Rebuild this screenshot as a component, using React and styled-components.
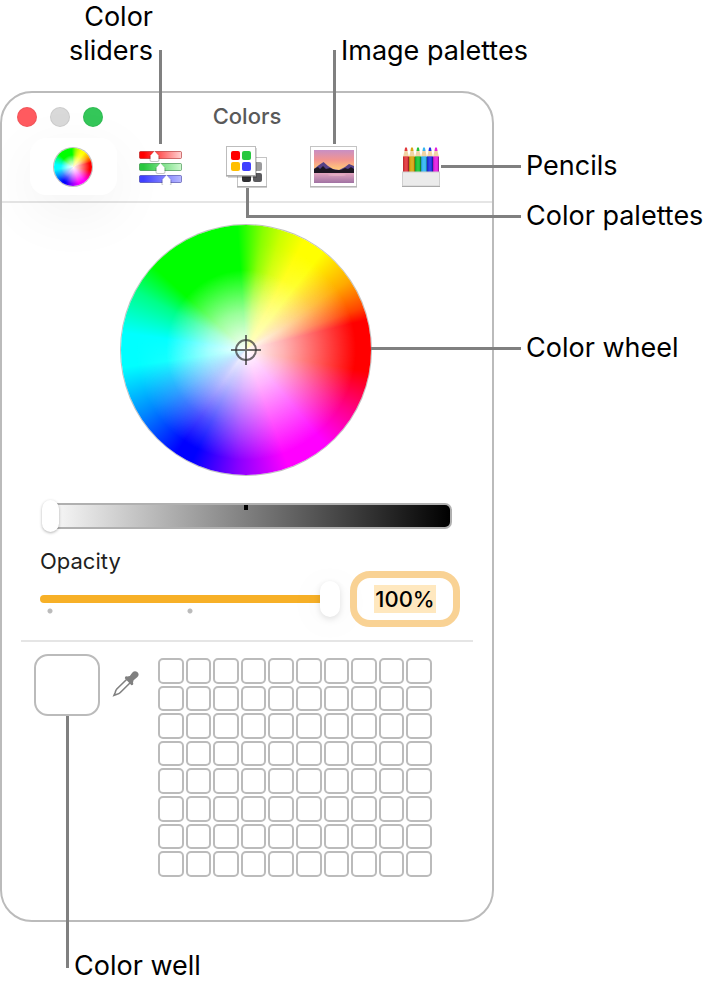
import React, { useState } from "react";
import styled, { createGlobalStyle, css } from "styled-components";

const pencils = ["#e0393e", "#d9a514", "#1fc43a", "#35b6f2", "#2433e6", "#e321e0"]
const swatches = Array.from({ length: 80 }, (_, index) => index)

const SlidersIcon = () => (
    <svg width="44" height="36" viewBox="0 0 44 36" aria-hidden="true">
        <defs>
            <linearGradient id="barRed"><stop offset="0.1" stopColor="#ff0000" /><stop offset="1" stopColor="#ffd3d3" /></linearGradient>
            <linearGradient id="barGreen"><stop offset="0.1" stopColor="#28c83e" /><stop offset="1" stopColor="#cdf8cf" /></linearGradient>
            <linearGradient id="barBlue"><stop offset="0.1" stopColor="#4040ff" /><stop offset="1" stopColor="#b9b9ff" /></linearGradient>
        </defs>
        <rect x="1.5" y="2.5" width="42" height="7" rx="1" fill="url(#barRed)" stroke="#a00000" strokeOpacity="0.5" />
        <rect x="1.5" y="14.5" width="42" height="7" rx="1" fill="url(#barGreen)" stroke="#107020" strokeOpacity="0.5" />
        <rect x="1.5" y="26.5" width="42" height="7" rx="1" fill="url(#barBlue)" stroke="#202090" strokeOpacity="0.5" />
        {[[16.5, 2], [22.5, 14], [28.5, 26]].map(([x, y]) => (
            <g key={x} transform={`translate(${x} ${y})`}>
                <path d="M0 0.6L5 5V9q0 2-2 2h-6q-2 0-2-2V5Z" fill="#000" opacity="0.22" />
                <path d="M0 0L4 4.500V8.500q0 1.500-1.500 1.500h-5Q-4 10-4 8.500V4.500Z" fill="#fff" />
            </g>
        ))}
    </svg>
)

const PalettesIcon = () => (
    <svg width="42" height="42" viewBox="0 0 42 42" aria-hidden="true">
        <rect x="11.5" y="11.5" width="29" height="29" fill="#fff" stroke="#c4c4c4" />
        <path d="M11 41h30" stroke="#999" />
        <rect x="27" y="16" width="9" height="9" rx="2" fill="#9b9b9d" />
        <rect x="16" y="27" width="9" height="9" rx="2" fill="#303033" />
        <rect x="27" y="27" width="9" height="9" rx="2" fill="#5b5b5e" />
        <rect x="2" y="2" width="29" height="30" fill="#000" opacity="0.16" />
        <rect x="0.5" y="0.5" width="29" height="29" fill="#fff" stroke="#bdbdbd" />
        <path d="M0 30h30" stroke="#999" />
        <rect x="5" y="5" width="9" height="9" rx="2" fill="#ff0000" />
        <rect x="16" y="5" width="9" height="9" rx="2" fill="#28c840" />
        <rect x="5" y="16" width="9" height="9" rx="2" fill="#ffbf00" />
        <rect x="16" y="16" width="9" height="9" rx="2" fill="#4040ff" />
    </svg>
)

const ImageIcon = () => (
    <svg width="48" height="42" viewBox="0 0 48 42" aria-hidden="true">
        <defs>
            <linearGradient id="sky" x1="0" y1="0" x2="0" y2="1">
                <stop offset="0" stopColor="#c88fc4" />
                <stop offset="0.3" stopColor="#f3948f" />
                <stop offset="0.55" stopColor="#ffc37c" />
                <stop offset="1" stopColor="#ffd98e" />
            </linearGradient>
            <linearGradient id="lake" x1="0" y1="0" x2="0" y2="1">
                <stop offset="0" stopColor="#e3a6bf" />
                <stop offset="1" stopColor="#a072a3" />
            </linearGradient>
        </defs>
        <rect x="0.5" y="0.5" width="46" height="40" fill="#fff" stroke="#c4c4c4" />
        <path d="M0 41h47" stroke="#aaa" />
        <rect x="4" y="4" width="40" height="33" fill="url(#sky)" />
        <path d="M4 23L9 19L13.500 16L18 20L23 23L29 24L35 21L39 18L44 20V27H4Z" fill="#564186" />
        <path d="M4 23L8 21L10 23L13 20L16 23L20 22L25 24L31 24L35 22L38 23L41 21L44 23V27H4Z" fill="#1c1621" />
        <rect x="4" y="27" width="40" height="10" fill="url(#lake)" />
        <ellipse cx="27" cy="29" rx="9" ry="1" fill="#f5c6cc" opacity="0.4" />
    </svg>
)

const PencilsIcon = () => (
    <svg width="38" height="40" viewBox="0 0 38 40" aria-hidden="true">
        {pencils.map((color, index) => (
            <g key={color} transform={`translate(${1 + index * 6} 0)`}>
                <path d="M0 10L2 2h2L6 10Z" fill="#f1d4a5" />
                <path d="M1.500 4L2 1q1-1.500 2 0L4.500 4Z" fill={color} />
                <path d="M0 10q1-2 2 0q1-2 2 0q1-2 2 0V26H0Z" fill={color} />
                <path d="M0.500 10V26" stroke="#000" strokeOpacity="0.15" />
                <path d="M3 10V26" stroke="#fff" strokeOpacity="0.15" />
                <path d="M5.500 10V26" stroke="#000" strokeOpacity="0.3" />
            </g>
        ))}
        <rect x="0.5" y="25" width="37" height="14" fill="#ebebeb" stroke="#cfcfcf" />
        <path d="M0 39.500h38" stroke="#a9a9a9" />
    </svg>
)

const Eyedropper = () => (
    <svg width="28" height="28" viewBox="0 0 28 28" aria-hidden="true">
        <path d="M14.800 9.200L4.800 19Q3.600 20.300 3.300 22.200L2 25.300L5 24.200Q7 23.800 8.300 22.500L18.200 12.700" fill="none" stroke="#808080" strokeWidth="1.600" />
        <path d="M12.800 8.200Q13 5.600 15.300 6.600L17.800 6L20.400 2.600Q22.600 0 25.300 2Q28 4.600 25.200 7.300L21.600 10.200L21 12.400Q22 14.800 19.400 15.200Z" fill="#808080" />
    </svg>
)

const Crosshair = () => (
    <svg width="30" height="30" viewBox="0 0 30 30" aria-hidden="true">
        <g fill="none" stroke="#333" strokeOpacity="0.7" strokeWidth="2">
            <circle cx="15" cy="15" r="10" />
            <path d="M15 0V30M0 15H30" />
        </g>
    </svg>
)

function App() {

    const [tool, setTool] = useState("wheel")
    const [brightness, setBrightness] = useState(0)
    const [opacity, setOpacity] = useState(100)

    const ChangeOpacity = (event) => {
        const value = parseInt(event.target.value, 10)
        setOpacity(isNaN(value) ? 0 : Math.min(100, value))
    }

    return (
        <>
            <GlobalStyle />
            <Page>
                <TopLabels>
                    <Label $end>Color<br />sliders</Label>
                    <Label>Image palettes</Label>
                </TopLabels>
                <Panel>
                    <TitleBar>
                        <Lights>
                            <Light $color="#ff5a5f" aria-label="Close" />
                            <Light $color="#d9d9d9" aria-label="Minimize" />
                            <Light $color="#34c759" aria-label="Zoom" />
                        </Lights>
                        <h1>Colors</h1>
                    </TitleBar>
                    <Toolbar>
                        <Slot>
                            <Tool $on={tool === "wheel"} aria-label="Color wheel" onClick={() => setTool("wheel")}>
                                <Wheel $size={38} />
                            </Tool>
                        </Slot>
                        <Slot>
                            <Tool $on={tool === "sliders"} aria-label="Color sliders" onClick={() => setTool("sliders")}><SlidersIcon /></Tool>
                            <UpLine />
                        </Slot>
                        <Slot>
                            <Tool $on={tool === "palettes"} aria-label="Color palettes" onClick={() => setTool("palettes")}><PalettesIcon /></Tool>
                            <ElbowLine />
                        </Slot>
                        <Slot>
                            <Tool $on={tool === "image"} aria-label="Image palettes" onClick={() => setTool("image")}><ImageIcon /></Tool>
                            <UpLine />
                        </Slot>
                        <Slot>
                            <Tool $on={tool === "pencils"} aria-label="Pencils" onClick={() => setTool("pencils")}><PencilsIcon /></Tool>
                            <PencilLine />
                        </Slot>
                    </Toolbar>
                    <WheelArea>
                        <WheelBox>
                            <Wheel $size={250}><Crosshair /></Wheel>
                            <WheelLine />
                        </WheelBox>
                    </WheelArea>
                    <Controls>
                        <Brightness type="range" aria-label="Brightness" min="0" max="100" value={brightness} onChange={(event) => setBrightness(event.target.value)} />
                        <label htmlFor="opacity">Opacity</label>
                        <OpacityRow>
                            <OpacitySlider id="opacity" type="range" min="0" max="100" value={opacity} onChange={ChangeOpacity} />
                            <Percent type="text" aria-label="Opacity value" value={`${opacity}%`} onChange={ChangeOpacity} />
                        </OpacityRow>
                    </Controls>
                    <Drawer>
                        <WellBox>
                            <Well aria-label="Color well" />
                            <WellLine />
                        </WellBox>
                        <Picker aria-label="Pick a color"><Eyedropper /></Picker>
                        <Swatches>
                            {swatches.map((number) => <Swatch key={number} aria-label={`Swatch ${number + 1}`} />)}
                        </Swatches>
                    </Drawer>
                </Panel>
                <SideLabels>
                    <Label>Pencils</Label>
                    <Label>Color palettes</Label>
                    <Label>Color wheel</Label>
                </SideLabels>
                <BottomLabels>
                    <Label>Color well</Label>
                </BottomLabels>
            </Page>
        </>
    )
}
export default App

const GlobalStyle = createGlobalStyle`
    * {
        box-sizing: border-box;
    }
    body {
        margin: 0;
        background-color: white;
        color: black;
        font-family: Inter, "Liberation Sans", sans-serif;
    }
    button, input {
        margin: 0;
        padding: 0;
        border: none;
        outline: none;
        background: none;
        font-family: inherit;
    }
    svg {
        display: block;
    }
`

const Page = styled.main`
    display: grid;
    grid-template-columns: minmax(0, 494px) minmax(200px, 1fr);
    grid-template-rows: auto auto auto;
`

const Label = styled.span`
    font-size: 27px;
    line-height: 34px;
    white-space: nowrap;
    text-align: ${(props) => (props.$end ? "right" : "left")};
`

const TopLabels = styled.div`
    grid-column: 1 / -1;
    display: flex;
    align-items: flex-end;
    padding-bottom: 23px;

    > :first-child {
        width: 153px;
        margin-right: 188px;
    }
`

const SideLabels = styled.aside`
    display: flex;
    flex-direction: column;
    gap: 16px;
    padding: 58px 0 0 32px;

    > :last-child {
        margin-top: 82px;
    }
`

const BottomLabels = styled.div`
    grid-column: 1 / -1;
    padding: 27px 0 4px 74px;
`

const Panel = styled.section`
    border: 2px solid #bbb;
    border-radius: 32px;
    padding-bottom: 43px;
`

const TitleBar = styled.header`
    display: grid;
    grid-template-columns: 1fr auto 1fr;
    align-items: center;
    height: 45px;
    padding: 3px 15px 0;

    h1 {
        margin: 0;
        padding-bottom: 2px;
        font-size: 22px;
        font-weight: 500;
        line-height: 28px;
        color: #5a5a5a;
    }
`

const Lights = styled.div`
    display: flex;
    gap: 13px;
`

const Light = styled.button`
    width: 20px;
    height: 20px;
    border-radius: 50%;
    background-color: ${(props) => props.$color};
    box-shadow: inset 0 0 0 1px rgba(0, 0, 0, 0.06);
`

const Toolbar = styled.nav`
    display: flex;
    padding: 0 28px 6px;
    border-bottom: 2px solid #e5e5e5;
`

const Slot = styled.div`
    position: relative;
    flex: 1;
`

const Tool = styled.button`
    display: flex;
    align-items: center;
    justify-content: center;
    width: 100%;
    height: 57px;
    border-radius: 16px;

    ${(props) => props.$on && css`
        background-color: white;
        box-shadow: 0 16px 60px rgba(0, 0, 0, 0.06);
    `}
`

const Line = styled.span`
    position: absolute;
    background-color: #808080;
    pointer-events: none;
`

const UpLine = styled(Line)`
    left: calc(50% - 1px);
    bottom: 51px;
    width: 3px;
    height: 94px;
`

const PencilLine = styled(Line)`
    top: 27px;
    left: calc(50% + 20px);
    width: 80px;
    height: 3px;
`

const ElbowLine = styled(Line)`
    top: 50px;
    left: calc(50% - 1px);
    width: 275px;
    height: 30px;
    border: solid #808080;
    border-width: 0 0 3px 3px;
    background: none;
`

const WheelArea = styled.div`
    display: flex;
    justify-content: center;
    padding: 22px 2px 24px 0;
`

const WheelBox = styled.div`
    position: relative;
`

const WheelLine = styled(Line)`
    top: 122px;
    left: 100%;
    width: 150px;
    height: 3px;
`

/* hue runs round the disc, two white layers fade it: a short one at green and cyan, a long one at the rest */
const Wheel = styled.span`
    display: grid;
    place-items: center;
    width: ${(props) => props.$size}px;
    height: ${(props) => props.$size}px;
    border-radius: 50%;
    overflow: hidden;
    background: conic-gradient(
        from -4deg,
        #0f0 0deg, #8f0 12deg, #cf0 21deg, #ff0 32deg, #ff0 42deg, #fa0 60deg, #f40 74deg,
        #f00 80deg, #f00 104deg, #f08 124deg, #f0f 144deg, #f0f 164deg, #80f 188deg, #00f 210deg,
        #00f 218deg, #08f 242deg, #0ff 266deg, #0ff 282deg, #0f8 302deg, #0f0 316deg, #0f0 360deg
    );

    > *, &::before, &::after {
        grid-area: 1 / 1;
    }
    > svg {
        z-index: 1;
    }
    &::before, &::after {
        content: "";
        width: 100%;
        height: 100%;
        border-radius: 50%;
    }
    &::before {
        background: radial-gradient(closest-side, white, rgba(255, 255, 255, 0.6) 30%, rgba(255, 255, 255, 0) 64%);
        mask-image: conic-gradient(black 0deg, transparent 70deg, transparent 190deg, black 270deg);
    }
    &::after {
        background: radial-gradient(closest-side, white, rgba(255, 255, 255, 0.7) 30%, rgba(255, 255, 255, 0) 88%);
        mask-image: conic-gradient(transparent 0deg, black 60deg, black 215deg, transparent 280deg);
    }
    box-shadow: 0 0 0 1px rgba(0, 0, 0, 0.25);
`

const Controls = styled.div`
    display: flex;
    flex-direction: column;
    margin: 0 19px;
    padding: 0 13px 13px 19px;
    border-bottom: 2px solid #e5e5e5;

    label {
        margin-top: 15px;
        font-size: 22px;
        font-weight: 400;
        line-height: 28px;
        color: #1f1f21;
    }
`

const thumb = css`
    appearance: none;
    background-color: white;
    border-radius: 10px;
`

const Brightness = styled.input`
    appearance: none;
    margin: 0 8px 0 2px;
    height: 33px;

    &::-webkit-slider-runnable-track {
        height: 26px;
        border: 2px solid #b0b0b0;
        border-left: none;
        border-radius: 13px 7px 7px 13px;
        background:
            linear-gradient(black, black) center top / 4px 5px no-repeat,
            linear-gradient(to right, white, black);
    }
    &::-webkit-slider-thumb {
        ${thumb}
        width: 17px;
        height: 32px;
        margin-top: -5px;
        box-shadow: 0 1px 3px rgba(0, 0, 0, 0.3);
    }
`

const OpacityRow = styled.div`
    display: flex;
    align-items: center;
    gap: 10px;
    margin-top: -4px;
`

const OpacitySlider = styled.input`
    appearance: none;
    flex: 1;
    min-width: 0;
    height: 36px;
    background:
        radial-gradient(circle, #bbb 2px, transparent 3px) 7px 27px / 6px 6px no-repeat,
        radial-gradient(circle, #bbb 2px, transparent 3px) 50% 27px / 6px 6px no-repeat;

    &::-webkit-slider-runnable-track {
        height: 8px;
        border-radius: 4px;
        background-color: #f7b027;
    }
    &::-webkit-slider-thumb {
        ${thumb}
        width: 20px;
        height: 36px;
        margin-top: -14px;
        box-shadow: 0 2px 6px rgba(0, 0, 0, 0.12), 0 4px 40px rgba(0, 0, 0, 0.06);
    }
`

const Percent = styled.input`
    width: 110px;
    height: 56px;
    padding: 7px 17px;
    border: 7px solid #f9d294;
    border-radius: 20px;
    background: linear-gradient(#ffe8bf, #ffe8bf) content-box no-repeat;
    font-size: 22px;
    font-weight: 500;
    line-height: 28px;
    text-align: center;
`

const Drawer = styled.div`
    display: flex;
    align-items: flex-start;
    padding: 12px 60px 0 32px;
`

const WellBox = styled.div`
    position: relative;
`

const Well = styled.button`
    display: block;
    width: 66px;
    height: 62px;
    border: 2px solid #bbb;
    border-radius: 14px;
`

const WellLine = styled(Line)`
    top: 100%;
    left: 32px;
    width: 3px;
    height: 252px;
`

const Picker = styled.button`
    margin: 16px 18px 0 12px;
`

const Swatches = styled.div`
    flex: 1;
    display: grid;
    grid-template-columns: repeat(10, 1fr);
    gap: 2px;
    margin-top: 4px;
`

const Swatch = styled.button`
    aspect-ratio: 1;
    border: 2px solid #bbb;
    border-radius: 5px;
`
